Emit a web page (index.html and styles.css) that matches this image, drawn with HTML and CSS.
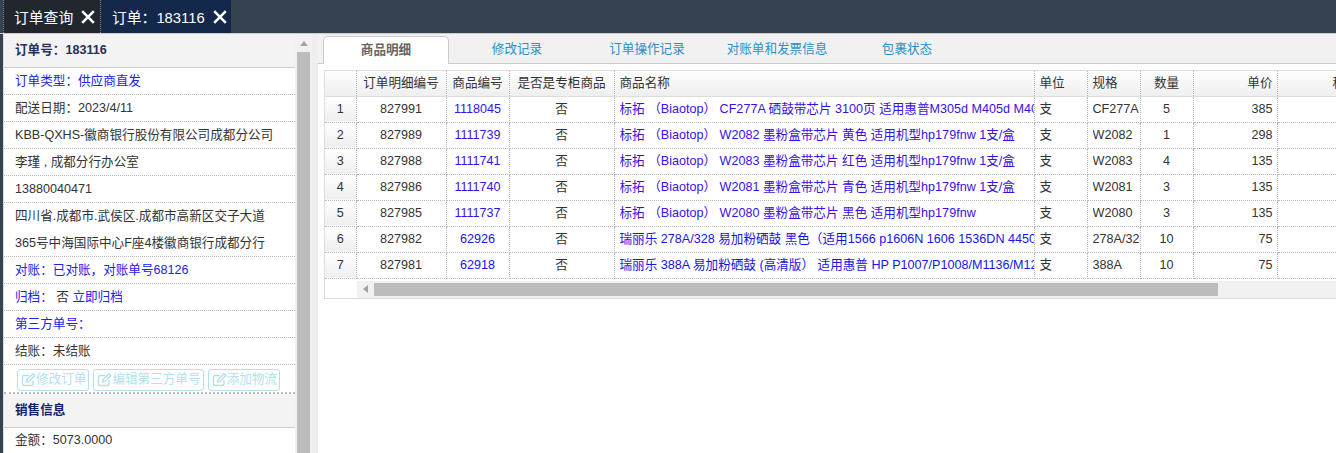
FILE: index.html
```html
<!DOCTYPE html>
<html>
<head>
    <meta charset="utf-8">
    <title>订单：183116</title>
    <link rel="stylesheet" href="styles.css">
</head>
<body>
    <div class="topbar">
        <div class="top-tab dark">订单查询 <svg class="close" viewBox="0 0 12 12"><path d="M1 1l10 10M11 1L1 11"/></svg></div>
        <div class="top-tab navy">订单：183116 <svg class="close" viewBox="0 0 12 12"><path d="M1 1l10 10M11 1L1 11"/></svg></div>
    </div>

    <div class="main">
        <div class="side">
            <div class="side-title">订单号：183116</div>
            <div class="side-row blue">订单类型：供应商直发</div>
            <div class="side-row">配送日期：2023/4/11</div>
            <div class="side-row">KBB-QXHS-徽商银行股份有限公司成都分公司</div>
            <div class="side-row">李瑾 , 成都分行办公室</div>
            <div class="side-row">13880040471</div>
            <div class="side-row tall">四川省.成都市.武侯区.成都市高新区交子大道<br>365号中海国际中心F座4楼徽商银行成都分行</div>
            <div class="side-row blue">对账：已对账，对账单号68126</div>
            <div class="side-row"><span class="blue">归档：</span> 否 <span class="blue">立即归档</span></div>
            <div class="side-row blue">第三方单号：</div>
            <div class="side-row">结账：未结账</div>
            <div class="side-btns">
                <span class="btn"><svg viewBox="0 0 15 15"><path d="M12 8.500V12a1.500 1.500 0 0 1-1.500 1.500H3A1.500 1.500 0 0 1 1.500 12V5A1.500 1.500 0 0 1 3 3.500h5"/><path class="pen" d="M5.500 10l.6-2.400L12 1.700l1.800 1.800L7.900 9.400z"/></svg>修改订单</span>
                <span class="btn"><svg viewBox="0 0 15 15"><path d="M12 8.500V12a1.500 1.500 0 0 1-1.500 1.500H3A1.500 1.500 0 0 1 1.500 12V5A1.500 1.500 0 0 1 3 3.500h5"/><path class="pen" d="M5.500 10l.6-2.400L12 1.700l1.800 1.800L7.900 9.400z"/></svg>编辑第三方单号</span>
                <span class="btn"><svg viewBox="0 0 15 15"><path d="M12 8.500V12a1.500 1.500 0 0 1-1.500 1.500H3A1.500 1.500 0 0 1 1.500 12V5A1.500 1.500 0 0 1 3 3.500h5"/><path class="pen" d="M5.500 10l.6-2.400L12 1.700l1.800 1.800L7.900 9.400z"/></svg>添加物流</span>
            </div>
            <div class="side-title second">销售信息</div>
            <div class="side-row">金额：5073.0000</div>
        </div>
        <div class="side-scroll">
            <div class="arrow-up"></div>
            <div class="side-thumb"></div>
        </div>

        <div class="content">
            <div class="tabs">
                <div class="tab active">商品明细</div>
                <div class="tab">修改记录</div>
                <div class="tab">订单操作记录</div>
                <div class="tab">对账单和发票信息</div>
                <div class="tab">包裹状态</div>
            </div>

            <div class="grid-wrap">
                <table class="grid">
                    <colgroup>
                        <col class="c-no"><col class="c-id"><col class="c-code"><col class="c-flag"><col class="c-name">
                        <col class="c-unit"><col class="c-spec"><col class="c-qty"><col class="c-price"><col class="c-rest">
                    </colgroup>
                    <thead>
                        <tr>
                            <th></th><th>订单明细编号</th><th>商品编号</th><th>是否是专柜商品</th><th class="left">商品名称</th>
                            <th class="left">单位</th><th class="left">规格</th><th>数量</th><th class="right">单价</th><th>税率</th>
                        </tr>
                    </thead>
                    <tbody>
                        <tr><td class="no">1</td><td>827991</td><td class="purple">1118045</td><td>否</td><td class="left purple"><div class="cut">标拓 （Biaotop） CF277A 硒鼓带芯片 3100页 适用惠普M305d M405d M405dn M405dw</div></td><td class="left">支</td><td class="left"><div class="cut">CF277A</div></td><td>5</td><td class="right">385</td><td></td></tr>
                        <tr><td class="no">2</td><td>827989</td><td class="purple">1111739</td><td>否</td><td class="left purple"><div class="cut">标拓 （Biaotop） W2082 墨粉盒带芯片 黄色 适用机型hp179fnw 1支/盒</div></td><td class="left">支</td><td class="left"><div class="cut">W2082</div></td><td>1</td><td class="right">298</td><td></td></tr>
                        <tr><td class="no">3</td><td>827988</td><td class="purple">1111741</td><td>否</td><td class="left purple"><div class="cut">标拓 （Biaotop） W2083 墨粉盒带芯片 红色 适用机型hp179fnw 1支/盒</div></td><td class="left">支</td><td class="left"><div class="cut">W2083</div></td><td>4</td><td class="right">135</td><td></td></tr>
                        <tr><td class="no">4</td><td>827986</td><td class="purple">1111740</td><td>否</td><td class="left purple"><div class="cut">标拓 （Biaotop） W2081 墨粉盒带芯片 青色 适用机型hp179fnw 1支/盒</div></td><td class="left">支</td><td class="left"><div class="cut">W2081</div></td><td>3</td><td class="right">135</td><td></td></tr>
                        <tr><td class="no">5</td><td>827985</td><td class="purple">1111737</td><td>否</td><td class="left purple"><div class="cut">标拓 （Biaotop） W2080 墨粉盒带芯片 黑色 适用机型hp179fnw</div></td><td class="left">支</td><td class="left"><div class="cut">W2080</div></td><td>3</td><td class="right">135</td><td></td></tr>
                        <tr><td class="no">6</td><td>827982</td><td class="bright">62926</td><td>否</td><td class="left bright"><div class="cut">瑞丽乐 278A/328 易加粉硒鼓 黑色（适用1566 p1606N 1606 1536DN 4450 4410 4412</div></td><td class="left">支</td><td class="left"><div class="cut">278A/328</div></td><td>10</td><td class="right">75</td><td></td></tr>
                        <tr><td class="no">7</td><td>827981</td><td class="bright">62918</td><td>否</td><td class="left bright"><div class="cut">瑞丽乐 388A 易加粉硒鼓 (高清版） 适用惠普 HP P1007/P1008/M1136/M1213/M1216</div></td><td class="left">支</td><td class="left"><div class="cut">388A</div></td><td>10</td><td class="right">75</td><td></td></tr>
                    </tbody>
                </table>
                <div class="hscroll">
                    <div class="arrow-left"></div>
                    <div class="hthumb"></div>
                </div>
            </div>
        </div>
    </div>
</body>
</html>
```

FILE: styles.css
```css
html, body {
    margin: 0;
    height: 453px;
    overflow: hidden;
}
body {
    font-family: "Liberation Sans", "Noto Sans CJK SC", sans-serif;
    font-size: 12.6px;
    color: #333;
    background-color: #36424f;
}
.blue {
    color: #2222ee;
}
.topbar {
    display: flex;
    height: 33px;
    background-color: #36424f;
    padding-left: 3px;
}
.top-tab {
    display: flex;
    align-items: center;
    gap: 8px;
    color: #fff;
    font-size: 14.8px;
    box-sizing: border-box;
}
.top-tab.dark {
    width: 98px;
    padding-left: 10px;
    background-color: #22272e;
    border-left: 1px dotted #888;
    border-right: 1px dotted #888;
}
.top-tab.navy {
    width: 130px;
    padding-left: 11px;
    background-color: #14284b;
}
.close {
    width: 14px;
    height: 14px;
    fill: none;
    stroke: #fff;
    stroke-width: 2.2;
}
.main {
    display: flex;
    height: 419px;
    border-top: 1px solid #ccc;
    padding-left: 3px;
}
.side {
    width: 292px;
    flex-shrink: 0;
    overflow: hidden;
    border-left: 1px solid #ddd;
    box-sizing: border-box;
    background-color: #fff;
}
.side-title {
    height: 34px;
    line-height: 32px;
    padding-left: 11px;
    background-color: #f3f3f3;
    border-bottom: 1px solid #ccc;
    font-weight: bold;
    color: #2a2f55;
    box-sizing: border-box;
}
.side-title.second {
    color: #14206e;
}
.side-title.second + .side-row {
    line-height: 24px;
}
.side-row {
    height: 27px;
    line-height: 26px;
    padding-left: 11px;
    border-bottom: 1px dotted #bbb;
    box-sizing: border-box;
    white-space: nowrap;
}
.side-row.tall {
    height: 54px;
    line-height: 27px;
}
.side-btns {
    display: flex;
    gap: 4px;
    height: 29px;
    padding: 4px 0 0 13px;
    border-bottom: 2px dotted #bbb;
    box-sizing: border-box;
}
.btn {
    display: flex;
    align-items: center;
    height: 22px;
    line-height: 18px;
    padding: 0 2px 2px 3px;
    border: 1px solid #b5dfec;
    border-radius: 3px;
    color: #b5dfec;
    box-sizing: border-box;
    white-space: nowrap;
}
.btn svg {
    width: 15px;
    height: 15px;
    fill: none;
    stroke: #b5dfec;
    stroke-width: 1.4;
}
.side-scroll {
    width: 17px;
    flex-shrink: 0;
    background-color: #f1f1f1;
    box-sizing: border-box;
    padding: 0 2px;
}
.arrow-up {
    width: 0;
    height: 0;
    margin: 7px auto 6px;
    border-left: 4px solid transparent;
    border-right: 4px solid transparent;
    border-bottom: 5px solid #a3a3a3;
}
.side-thumb {
    height: 403px;
    background-color: #bcbcbc;
}
.content {
    flex: 1;
    min-width: 0;
    background-color: #fff;
    border-left: 6px solid #eee;
}
.tabs {
    display: flex;
    height: 30px;
    padding: 2px 0 0 5px;
    background-color: #f1f1f1;
    border-bottom: 1px solid #ccc;
    box-sizing: border-box;
}
.tab {
    width: 130px;
    height: 28px;
    line-height: 26px;
    text-align: center;
    color: #2a8fc9;
    box-sizing: border-box;
}
.tab.active {
    width: 126px;
    margin-right: 3px;
    background-color: #fff;
    color: #666;
    font-weight: bold;
    border: 1px solid #ccc;
    border-bottom: none;
    border-radius: 5px 5px 0 0;
}
.grid-wrap {
    margin: 6px 0 0 6px;
    border: 1px solid #ddd;
    border-right: none;
    height: 229px;
    box-sizing: border-box;
    overflow: hidden;
}
.grid {
    table-layout: fixed;
    width: 1088px;
    border-collapse: collapse;
}
.c-no { width: 31px; }
.c-id { width: 90px; }
.c-code { width: 63px; }
.c-flag { width: 105px; }
.c-name { width: 420px; }
.c-unit { width: 53px; }
.c-spec { width: 53px; }
.c-qty { width: 53px; }
.c-price { width: 84px; }
.c-rest { width: 136px; }
.grid th, .grid td {
    height: 26px;
    padding: 0 4px;
    line-height: 16px;
    border-right: 1px dotted #bbb;
    border-bottom: 1px dotted #bbb;
    text-align: center;
    font-weight: normal;
    white-space: nowrap;
    overflow: hidden;
    box-sizing: border-box;
}
.grid th {
    height: 25px;
    line-height: 14px;
    background: linear-gradient(#fff, #eee);
    border-bottom: 1px solid #ddd;
}
.grid .left {
    text-align: left;
    padding-left: 5px;
}
.grid .right {
    text-align: right;
}
.grid .no {
    background: linear-gradient(#fff, #eee);
}
.grid .purple {
    color: #3a10e5;
}
.grid .bright {
    color: #1515e8;
}
.cut {
    overflow: hidden;
    margin-right: -4px;
}
.hscroll {
    display: flex;
    align-items: center;
    height: 17px;
    margin: 2px 0 0 32px;
    background-color: #f1f1f1;
}
.arrow-left {
    width: 0;
    height: 0;
    margin: 0 6px 0 6px;
    border-top: 4px solid transparent;
    border-bottom: 4px solid transparent;
    border-right: 5px solid #a3a3a3;
}
.hthumb {
    width: 844px;
    height: 13px;
    background-color: #bcbcbc;
}
```
